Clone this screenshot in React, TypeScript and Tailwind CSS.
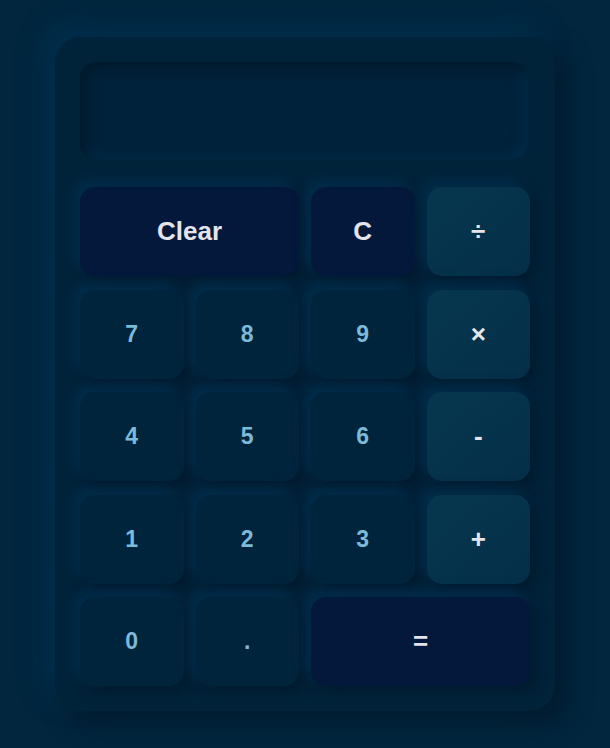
import React from 'react';

type Kind = 'num' | 'op' | 'act';

const keys: { label: string; kind: Kind; wide?: boolean }[] = [
  { label: 'Clear', kind: 'act', wide: true },
  { label: 'C', kind: 'act' },
  { label: '÷', kind: 'op' },
  { label: '7', kind: 'num' },
  { label: '8', kind: 'num' },
  { label: '9', kind: 'num' },
  { label: '×', kind: 'op' },
  { label: '4', kind: 'num' },
  { label: '5', kind: 'num' },
  { label: '6', kind: 'num' },
  { label: '-', kind: 'op' },
  { label: '1', kind: 'num' },
  { label: '2', kind: 'num' },
  { label: '3', kind: 'num' },
  { label: '+', kind: 'op' },
  { label: '0', kind: 'num' },
  { label: '.', kind: 'num' },
  { label: '=', kind: 'act', wide: true },
];

const kindClass: Record<Kind, string> = {
  num: 'bg-[#00243c] text-[#7db9d9] text-[23px]',
  op: 'bg-gradient-to-br from-[#06374f] to-[#052f48] text-[#e6e6ea] text-[26px]',
  act: 'bg-[#03183a] text-[#e4e4ea] text-[26px]',
};

export default function App() {
  return (
    <div className="min-h-screen bg-[#01263e] flex items-center justify-center font-['Liberation_Sans',Arial,sans-serif]">
      <div className="w-[500px] p-[25px] rounded-[26px] bg-[#00233a] shadow-[12px_12px_24px_#001b2f,-12px_-12px_24px_#012f4d]">
        <div className="h-[98px] mr-[2px] rounded-[16px] bg-[#00223a] shadow-[inset_6px_6px_12px_#001a2d,inset_-6px_-6px_12px_#012b47]"></div>
        <div className="mt-[27px] grid grid-cols-4 gap-x-[12px] gap-y-[13.5px]">
          {keys.map((k) => (
            <button
              key={k.label}
              className={`h-[89px] rounded-[15px] font-bold flex items-center justify-center shadow-[6px_6px_12px_#001b2f,-6px_-6px_12px_#012e4c] ${kindClass[k.kind]} ${k.wide ? 'col-span-2' : ''}`}
            >
              {k.label}
            </button>
          ))}
        </div>
      </div>
    </div>
  );
}
